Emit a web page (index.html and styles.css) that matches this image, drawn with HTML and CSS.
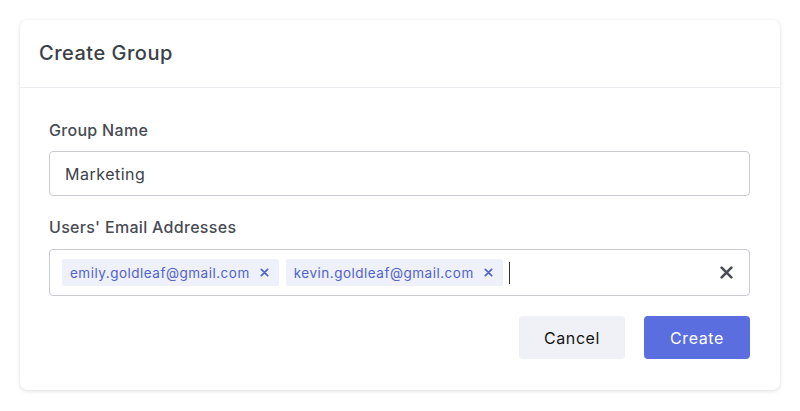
FILE: index.html
```html
<!DOCTYPE html>
<html lang="en">
<head>
<meta charset="utf-8">
<title>Create Group</title>
<link rel="stylesheet" href="styles.css">
</head>
<body>
<div class="card">
  <div class="card-header">
    <h1 class="title">Create Group</h1>
  </div>
  <div class="card-body">
    <label class="label">Group Name</label>
    <div class="input">Marketing</div>
    <label class="label label-second">Users' Email Addresses</label>
    <div class="input tags-input">
      <span class="chip">emily.goldleaf@gmail.com<span class="chip-x"><svg width="9" height="9" viewBox="0 0 10 10"><path d="M1.5 1.5L8.5 8.5M8.5 1.5L1.5 8.5" stroke="currentColor" stroke-width="2" stroke-linecap="round"/></svg></span></span>
      <span class="chip">kevin.goldleaf@gmail.com<span class="chip-x"><svg width="9" height="9" viewBox="0 0 10 10"><path d="M1.5 1.5L8.5 8.5M8.5 1.5L1.5 8.5" stroke="currentColor" stroke-width="2" stroke-linecap="round"/></svg></span></span>
      <span class="caret"></span>
      <span class="clear"><svg width="13" height="13" viewBox="0 0 12 12"><path d="M1.5 1.5L10.5 10.5M10.5 1.5L1.5 10.5" stroke="currentColor" stroke-width="2.4" stroke-linecap="round"/></svg></span>
    </div>
    <div class="actions">
      <button class="btn btn-cancel">Cancel</button>
      <button class="btn btn-create">Create</button>
    </div>
  </div>
</div>
</body>
</html>
```
FILE: styles.css
```css
* { box-sizing: border-box; }
html, body { margin: 0; padding: 0; background: #ffffff; }
body {
  font-family: "Inter", "Noto Sans", sans-serif;
  padding: 20px;
}
.card {
  width: 760px;
  height: 370px;
  background: #fff;
  border-radius: 7px;
  box-shadow: 0 1px 4px rgba(0,0,0,0.13), 0 0 1px rgba(0,0,0,0.08);
}
.card-header {
  height: 68px;
  border-bottom: 1px solid #ebedf0;
  display: flex;
  align-items: center;
  padding: 0 19px 2px;
}
.title {
  margin: 0;
  font-size: 20px;
  font-weight: 500;
  color: #3b3f47;
  letter-spacing: 0.5px;
}
.card-body {
  padding: 32px 30px 0 29px;
  display: flex;
  flex-direction: column;
}
.label {
  font-size: 16px;
  line-height: 20px;
  font-weight: 500;
  color: #474b54;
  letter-spacing: 0.3px;
  margin-bottom: 11px;
}
.label-second { margin-top: 21px; margin-bottom: 12px; }
.input {
  height: 45px;
  border: 1px solid #c9cbd0;
  border-radius: 4px;
  padding: 0 15px;
  display: flex;
  align-items: center;
  font-size: 16px;
  letter-spacing: 0.5px;
  color: #3d4149;
}
.tags-input {
  height: 47px;
  padding: 0 16px 0 12px;
  gap: 7px;
  letter-spacing: normal;
}
.chip {
  display: inline-flex;
  align-items: center;
  height: 27px;
  background: #eef0fa;
  border-radius: 2px;
  padding: 0 10px 0 8px;
  font-size: 13.5px;
  letter-spacing: 0.5px;
  color: #5363c9;
}
.chip-x {
  display: inline-flex;
  margin-left: 10px;
  color: #5466cc;
}
.caret {
  width: 1.5px;
  height: 22px;
  background: #333;
  margin-left: -1px;
}
.clear {
  margin-left: auto;
  display: inline-flex;
  color: #4a4d55;
}
.actions {
  display: flex;
  justify-content: flex-end;
  gap: 19px;
  margin-top: 20px;
}
.btn {
  width: 106px;
  height: 43px;
  border: none;
  border-radius: 4px;
  font-family: inherit;
  font-size: 16px;
  font-weight: 400;
  letter-spacing: 0.6px;
  cursor: pointer;
}
.btn-cancel { background: #f0f1f6; color: #141414; }
.btn-create { background: #5a6ee0; color: #fff; }
```
